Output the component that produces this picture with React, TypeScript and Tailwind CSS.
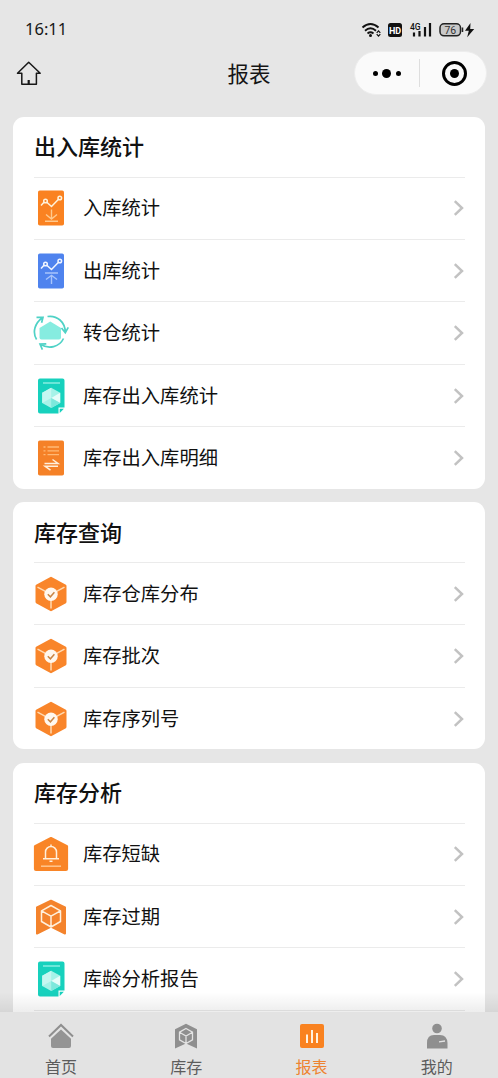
import React from "react";

const DownloadChartIcon = () => (
  <svg width="36" height="36" viewBox="0 0 36 36" fill="none">
    <rect x="5" y="0.5" width="26" height="35" rx="1.8" fill="#fa8221" />
    <g stroke="#fff3dc" strokeWidth="1.5">
      <path d="M8 15.5l3.2-3.500M13.800 12.200l4.700 4.300 7-7.200" />
      <circle cx="12.500" cy="11" r="1.800" />
      <circle cx="26.800" cy="8" r="1.800" />
    </g>
    <path d="M18.500 19.500v9.500M13 24.500l5.500 4.500 5.500-4.500M12 31.300h13" stroke="#ffc98d" strokeWidth="1.400" />
  </svg>
);

const UploadChartIcon = () => (
  <svg width="36" height="36" viewBox="0 0 36 36" fill="none">
    <rect x="5" y="0.500" width="26" height="35" rx="1.800" fill="#4f83ee" />
    <g stroke="#f2f6ff" strokeWidth="1.500">
      <path d="M8 15.500l3.200-3.500M13.800 12.200l4.700 4.300 7-7.200" />
      <circle cx="12.500" cy="11" r="1.800" />
      <circle cx="26.800" cy="8" r="1.800" />
    </g>
    <path d="M12 20h13M18.500 31v-8.600M13 26.500l5.500-4.200 5.500 4.200" stroke="#a9c5fb" strokeWidth="1.400" />
  </svg>
);

const TransferIcon = () => (
  <svg width="36" height="36" viewBox="0 0 36 36" fill="none">
    <path d="M6.500 13L17.300 6.500 28 13V22.500q0 2-2 2H8.500q-2 0-2-2z" fill="#86ece0" />
    <g stroke="#4fd2c6" strokeWidth="1.700">
      <path d="M3.600 24.500C-1 17 2 8 9.400 2.700M3.500 2.300h6.500l-1.400 5.500" />
      <path d="M14.500 1.500C24 0 32.300 7 32.300 17.500M28.500 13l3.800 4.700 3-5.400" />
      <path d="M30.500 23.500C26.500 32 16 34.600 7.300 29.300M9.400 34.600l-2.400-5.500 6.300-.3" />
    </g>
  </svg>
);

const ReportIcon = () => (
  <svg width="36" height="36" viewBox="0 0 36 36" fill="none">
    <path d="M7 .500h22.500q2 0 2 2V29.500h-6v6H7q-2 0-2-2v-31q0-2 2-2z" fill="#17d1bd" />
    <path d="M26.700 30.700h4.200l-4.200 4.200z" fill="#17d1bd" />
    <path d="M10 5h17" stroke="#8ff0e4" strokeWidth="1.400" />
    <path d="M18.200 9.700l9 5.100v10.200l-9 5.100-9-5.100v-10.200z" fill="#a6f2e8" />
    <path d="M18.200 9.700v10.200l-9 5.100v-10.200z" fill="#c6f7f1" />
    <path d="M18.200 19.900l9-5.100v10.200z" fill="#e6fcf9" />
    <path d="M18.200 19.900l9 5.100-9 5.100z" fill="#7de8dc" />
  </svg>
);

const DetailIcon = () => (
  <svg width="36" height="36" viewBox="0 0 36 36" fill="none">
    <rect x="5" y="0.500" width="26" height="35" rx="1.800" fill="#f58127" />
    <path
      d="M10.500 7h2M14.500 7h11.500M10.500 10.800h2M14.500 10.800h11.500M10.500 14.600h2M14.500 14.600h11.500"
      stroke="#ffb975"
      strokeWidth="1.300"
    />
    <path d="M11.500 23.500h13.500l-5.500-4M25 26.200H12l5.500 4" stroke="#fff0dc" strokeWidth="1.500" />
  </svg>
);

const BoxCheckIcon = () => (
  <svg width="36" height="36" viewBox="0 0 36 36" fill="none">
    <path
      d="M18 2l14.300 7.900v16.200L18 34 3.700 26.100V9.900z"
      fill="#f9852a"
      stroke="#f9852a"
      strokeWidth="2.400"
      strokeLinejoin="round"
    />
    <path d="M4.500 11.200L18 18.500l13.500-7.300M18 18.500V32.500" stroke="#ffd9b0" strokeWidth="1.500" />
    <circle cx="18" cy="18.300" r="6.700" fill="#fff8ef" />
    <path d="M14.800 18.300l2.600 2.500 4-4.500" stroke="#c98544" strokeWidth="1.500" />
  </svg>
);

const ShortageIcon = () => (
  <svg width="36" height="36" viewBox="0 0 36 36" fill="none">
    <path
      d="M18 2L34 10.200v22.800q0 1-1 1H3q-1 0-1-1V10.200z"
      fill="#f98527"
      stroke="#f98527"
      strokeWidth="2.200"
      strokeLinejoin="round"
    />
    <path
      d="M18 8.500v2M12.500 22.500v-6.500a5.500 5.500 0 0 1 11 0v6.500M10 22.800h16M16.500 25.300h3"
      stroke="#fff0dc"
      strokeWidth="1.500"
    />
    <path d="M8 30.200h20" stroke="#ffc68e" strokeWidth="1.500" />
  </svg>
);

const ExpiredIcon = () => (
  <svg width="36" height="36" viewBox="0 0 36 36" fill="none">
    <path
      d="M18 1.700L32 8.500V34.500L18 27.500 4 34.500V8.500z"
      fill="#f4832c"
      stroke="#f4832c"
      strokeWidth="2"
      strokeLinejoin="round"
    />
    <path
      d="M18 6.500l9.500 5.300v10.700L18 28l-9.500-5.500V11.800zM8.500 11.800L18 17.200l9.500-5.400M18 17.200V28"
      stroke="#fff0dc"
      strokeWidth="1.500"
      strokeLinejoin="round"
    />
  </svg>
);

const sections = [
  {
    title: "出入库统计",
    items: [
      { label: "入库统计", Icon: DownloadChartIcon },
      { label: "出库统计", Icon: UploadChartIcon },
      { label: "转仓统计", Icon: TransferIcon },
      { label: "库存出入库统计", Icon: ReportIcon },
      { label: "库存出入库明细", Icon: DetailIcon },
    ],
  },
  {
    title: "库存查询",
    items: [
      { label: "库存仓库分布", Icon: BoxCheckIcon },
      { label: "库存批次", Icon: BoxCheckIcon },
      { label: "库存序列号", Icon: BoxCheckIcon },
    ],
  },
  {
    title: "库存分析",
    more: true,
    items: [
      { label: "库存短缺", Icon: ShortageIcon },
      { label: "库存过期", Icon: ExpiredIcon },
      { label: "库龄分析报告", Icon: ReportIcon },
    ],
  },
];

const tabs = [
  {
    label: "首页",
    icon: (
      <svg width="28" height="28" viewBox="0 0 28 28" fill="none">
        <path d="M2 14.500L14 3l12 11.500" stroke="#8f8f8f" strokeWidth="2" />
        <path d="M14 7.500l10 9.200V24q0 2-2 2H6q-2 0-2-2v-7.300z" fill="#949494" />
      </svg>
    ),
  },
  {
    label: "库存",
    icon: (
      <svg width="28" height="28" viewBox="0 0 28 28" fill="none">
        <path d="M14 1.800l11 5.400V26.500L14 21.500 3 26.500V7.200z" fill="#8f8f8f" />
        <path
          d="M14 6.500l6.500 3.700v7.600L14 21.500l-6.500-3.700v-7.600zM7.500 10.200L14 14l6.500-3.800M14 14v7.500"
          stroke="#e3e3e3"
          strokeWidth="1.300"
        />
      </svg>
    ),
  },
  {
    label: "报表",
    active: true,
    icon: (
      <svg width="28" height="28" viewBox="0 0 28 28" fill="none">
        <rect x="2" y="2" width="24" height="24" rx="2" fill="#f98220" />
        <path d="M9 12.500v8.500M14 8v13M19 11v10" stroke="#fff1de" strokeWidth="2" />
      </svg>
    ),
  },
  {
    label: "我的",
    icon: (
      <svg width="28" height="28" viewBox="0 0 28 28" fill="none">
        <circle cx="14" cy="6.500" r="4.800" fill="#8f8f8f" />
        <path d="M4 26.500V21q0-8 7-8h6q7 0 7.500 8v5.500z" fill="#8f8f8f" />
        <path d="M16 19.800l6-.8" stroke="#e3e3e3" strokeWidth="1.300" />
      </svg>
    ),
  },
];

const StatusBar = () => (
  <div className="flex h-[50px] items-center justify-between pt-[9px] pr-[23px] pl-[25px]">
    <span className="font-['Noto_Sans'] text-[16.500px] text-[#181818]">16:11</span>
    <svg width="114" height="20" viewBox="0 0 114 20" fill="none">
      <g stroke="#111" strokeWidth="1.900">
        <path d="M1.500 7.500Q9.500.5 17.500 7.500" />
        <path d="M4 10.700Q9.500 6 15 10.700" />
        <path d="M6.500 13.500Q9.500 11.200 12.500 13.500" />
      </g>
      <circle cx="9.500" cy="15.500" r="1.500" fill="#111" />
      <path d="M15.700 12.800l1.800-2 1.800 2M15.700 14.200l1.800 2 1.800-2" stroke="#111" strokeWidth="1.200" />
      <rect x="27" y="3" width="14" height="14" rx="2.500" fill="#111" />
      <text x="34" y="13.500" textAnchor="middle" fill="#fff" fontSize="9" fontWeight="700" fontFamily="Roboto">
        HD
      </text>
      <text x="49" y="10" fill="#111" fontSize="8.500" fontWeight="500" fontFamily="Roboto">
        4G
      </text>
      <path d="M53 12.500v4M58.500 11v5.500M64 7v9.500M69 3v13.500" stroke="#111" strokeWidth="2.200" />
      <rect x="79" y="3.800" width="20.500" height="12" rx="4" fill="#c9c9c9" stroke="#222" strokeWidth="1.500" />
      <path d="M101.500 7.500v4.500" stroke="#222" strokeWidth="1.500" />
      <text x="89.300" y="13.500" textAnchor="middle" fill="#333" fontSize="10.500" fontFamily="Roboto">
        76
      </text>
      <path d="M109.500 3l-5.500 7.800h3.800l-1.600 6.400 7-8.200h-4z" fill="#111" />
    </svg>
  </div>
);

const NavBar = () => (
  <div className="grid h-[46px] grid-cols-3 items-center">
    <svg className="ml-4" width="26" height="26" viewBox="0 0 26 26" fill="none">
      <path
        d="M12.700 2.300L1.500 13.300h4.300v11h14.600v-11h3.800z"
        stroke="#181818"
        strokeWidth="1.500"
        strokeLinejoin="round"
      />
      <path d="M12.700 20v4" stroke="#181818" strokeWidth="2.200" />
    </svg>
    <h1 className="pt-[4px] text-center text-[21.500px] text-[#151515]">报表</h1>
    <div className="mr-[11px] flex h-[44px] w-[133px] items-center justify-self-end rounded-full border border-[#ededed] bg-[#fafafa]">
      <div className="flex flex-1 items-center justify-center gap-[4.500px]">
        <span className="size-[5px] rounded-full bg-black" />
        <span className="size-[9px] rounded-full bg-black" />
        <span className="size-[5px] rounded-full bg-black" />
      </div>
      <div className="h-[28px] w-px bg-[#dedede]" />
      <div className="flex flex-1 justify-center pl-[3px]">
        <div className="flex size-[25px] items-center justify-center rounded-full border-[3px] border-black">
          <span className="size-[9px] rounded-full bg-black" />
        </div>
      </div>
    </div>
  </div>
);

const App: React.FC = () => {
  return (
    <div className="flex h-[1078px] w-[498px] flex-col overflow-hidden bg-[#e6e6e6] font-['Liberation_Sans','Noto_Sans_CJK_SC',sans-serif] text-[#111]">
      <StatusBar />
      <NavBar />

      <main className="relative min-h-0 flex-1 overflow-hidden px-[13px] pt-[21px]">
        <div className="flex flex-col gap-[13.800px]">
          {sections.map((section) => (
            <section key={section.title} className="rounded-[11px] bg-white pr-5 pl-[21px]">
              <h2 className="flex h-[59.500px] items-center pt-[2px] text-[22px] font-medium">{section.title}</h2>
              {section.items.map(({ label, Icon }) => (
                <div key={label} className="flex h-[62.450px] items-center border-t border-[#ebebeb]">
                  <span className="-ml-px">
                    <Icon />
                  </span>
                  <span className="ml-[14px] flex-1 pt-[3px] text-[19.300px]">{label}</span>
                  <svg width="12" height="18" viewBox="0 0 12 18" fill="none">
                    <path d="M1.800 2.200l7.200 6.800-7.200 6.800" stroke="#c2c2c2" strokeWidth="2.500" />
                  </svg>
                </div>
              ))}
              {section.more && <div className="h-4 border-t border-[#ebebeb]" />}
            </section>
          ))}
        </div>
        <div className="absolute inset-x-0 bottom-0 h-[20px] bg-gradient-to-b from-transparent to-black/7" />
      </main>

      <nav className="-mx-[1.500px] grid h-[66px] shrink-0 grid-cols-4 bg-[#e3e3e3]">
        {tabs.map((tab) => (
          <div key={tab.label} className="flex flex-col items-center pt-[10px]">
            {tab.icon}
            <span
              className={
                tab.active
                  ? "mt-[6px] text-[16px] leading-6 text-[#ee8331]"
                  : "mt-[6px] text-[16px] leading-6 text-[#5c5c5c]"
              }
            >
              {tab.label}
            </span>
          </div>
        ))}
      </nav>
    </div>
  );
};

export default App;
